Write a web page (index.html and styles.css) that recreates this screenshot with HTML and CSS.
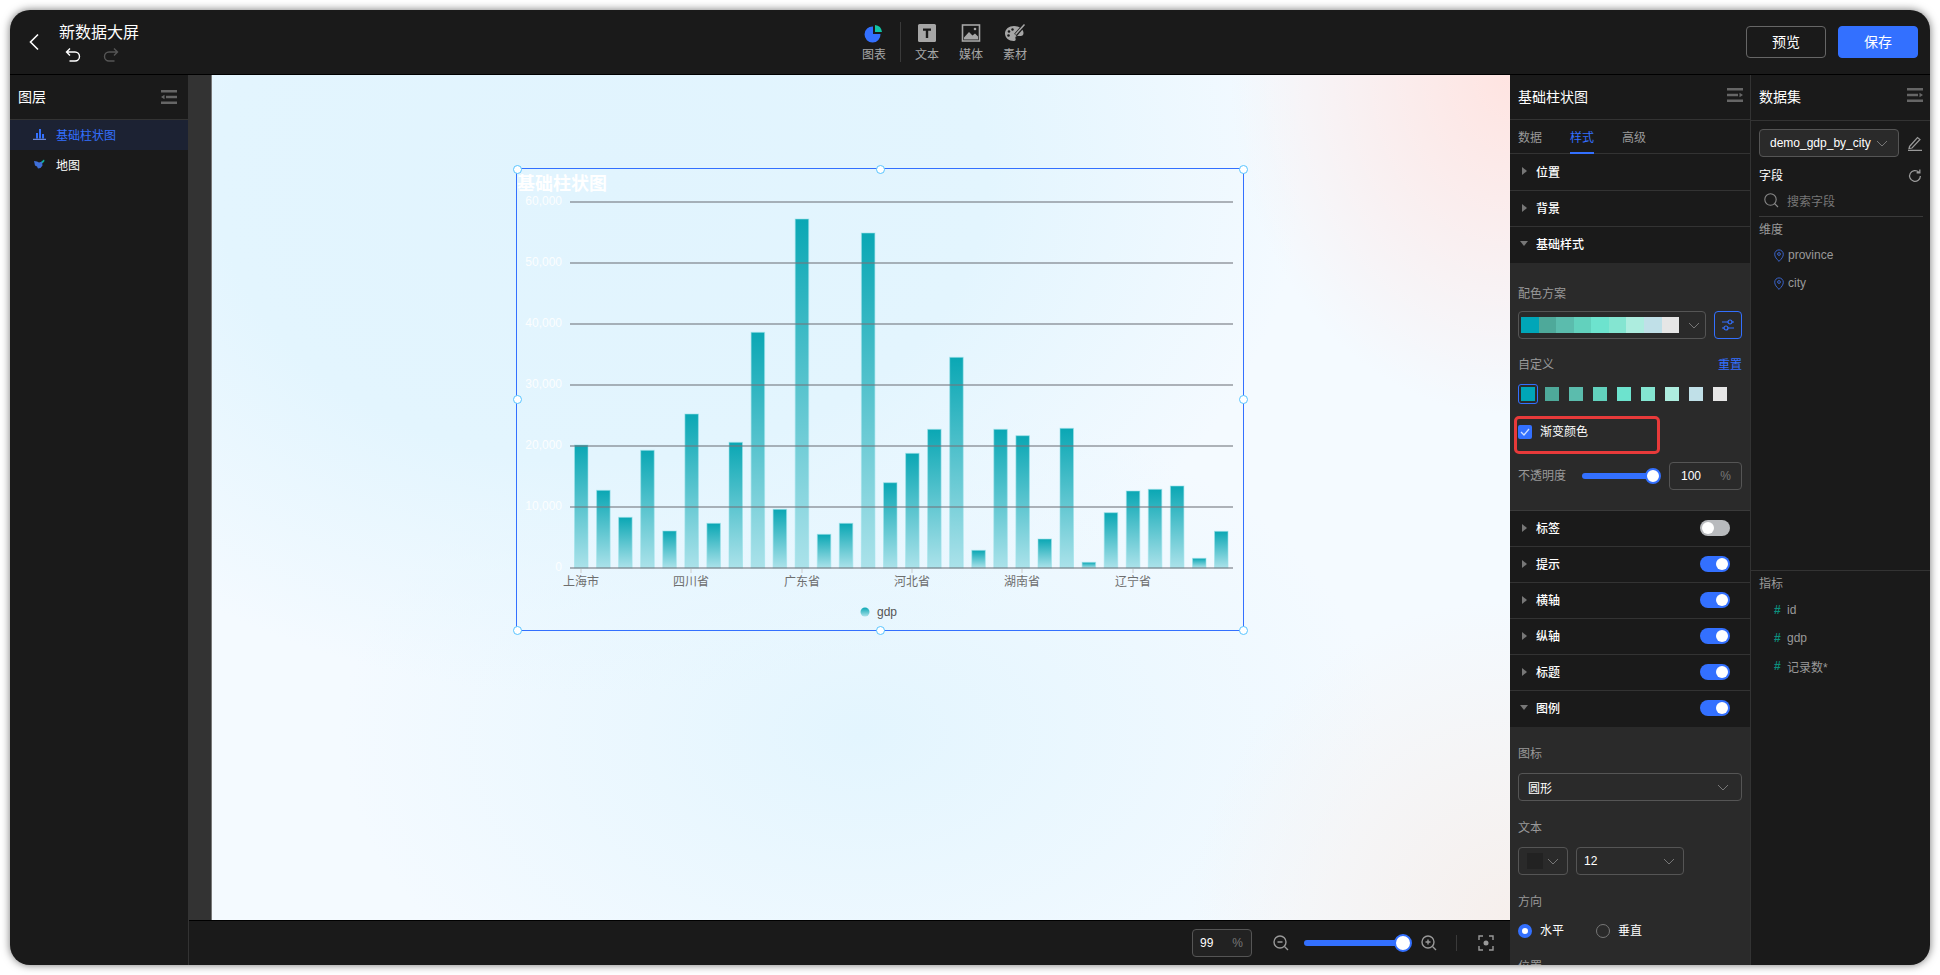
FILE: index.html
```html
<!DOCTYPE html>
<html lang="zh-CN">
<head>
    <meta charset="UTF-8">
    <title>新数据大屏</title>
    <link rel="stylesheet" href="styles.css">
</head>
<body>
    <div class="app">
        <!-- top bar -->
        <header class="topbar">
            <div class="top-left">
                <svg class="back" width="12" height="18" viewBox="0 0 12 18"><polyline points="10,1.5 2.5,9 10,16.5" /></svg>
                <div>
                    <div class="doc-title">新数据大屏</div>
                    <div class="history">
                        <svg width="16" height="16" viewBox="0 0 16 16"><path d="M5 1.5 1.5 5 5 8.5M1.5 5H10a4.5 4.5 0 0 1 0 9H4.5" /></svg>
                        <svg class="dim" width="16" height="16" viewBox="0 0 16 16"><path d="M11 1.5 14.500 5 11 8.500M14.500 5H6a4.500 4.500 0 0 0 0 9h5.500" /></svg>
                    </div>
                </div>
            </div>
            <div class="tools">
                <div class="tool">
                    <svg width="20" height="20" viewBox="0 0 20 20">
                        <path d="M9 3.500V11h7.500A8 8 0 1 1 9 3.500Z" fill="#3370ff" />
                        <path d="M11 2a8 8 0 0 1 7 7h-7Z" fill="#10c5a5" />
                    </svg>
                    <span>图表</span>
                </div>
                <i class="tool-sep"></i>
                <div class="tool">
                    <svg width="20" height="20" viewBox="0 0 20 20">
                        <rect x="1" y="1" width="18" height="18" rx="1.500" fill="#a6a6a6" />
                        <path d="M6 5.500h8v2.200h-2.800V15H8.800V7.700H6Z" fill="#1a1a1a" />
                    </svg>
                    <span>文本</span>
                </div>
                <div class="tool">
                    <svg width="20" height="20" viewBox="0 0 20 20">
                        <rect x="1.500" y="2" width="17" height="16" fill="#1a1a1a" stroke="#a6a6a6" stroke-width="1.600" />
                        <path d="M3 14.500 8 9l3.500 3.500 2.500-2 3 3v3H3Z" fill="#a6a6a6" />
                        <circle cx="14" cy="6" r="1.300" fill="#a6a6a6" />
                    </svg>
                    <span>媒体</span>
                </div>
                <div class="tool">
                    <svg width="22" height="20" viewBox="0 0 22 20">
                        <path d="M10 3c-5 0-9 3-9 7.500S5 18 9.500 18c2 0 2.500-1 2-2.500-.5-1.400.5-2.500 2-2.500h3c2 0 3-1 3-3C19.500 6 15 3 10 3Z" fill="#a6a6a6" />
                        <circle cx="5" cy="8.500" r="1.300" fill="#1a1a1a" /><circle cx="4.500" cy="12.500" r="1.300" fill="#1a1a1a" /><circle cx="8.500" cy="6.500" r="1.200" fill="#1a1a1a" />
                        <path d="M21 1 11.500 12" stroke="#1a1a1a" stroke-width="3.500" />
                        <path d="M20.500 1.500 11.500 11.500" stroke="#a6a6a6" stroke-width="1.500" />
                    </svg>
                    <span>素材</span>
                </div>
            </div>
            <div class="top-actions">
                <button class="btn">预览</button>
                <button class="btn btn-primary">保存</button>
            </div>
        </header>

        <div class="main">
            <!-- layers -->
            <aside class="layers">
                <div class="panel-head">
                    <span>图层</span>
                    <svg class="menu-icon" width="16" height="14" viewBox="0 0 16 14"><path d="M0 0h16v2.500H0ZM5 5.700h11v2.500H5ZM0 11.500h16V14H0ZM0 7l3.500-2.300v4.600Z" /></svg>
                </div>
                <div class="layer active">
                    <svg width="13" height="12" viewBox="0 0 13 12"><path d="M3 5h2v5.500H3ZM6 1h2v9.500H6ZM9 6h2v4.500H9Z" fill="#3370ff" /><path d="M0 11.300h13" stroke="#7f9fff" stroke-width="1" /></svg>
                    <span>基础柱状图</span>
                </div>
                <div class="layer">
                    <svg width="13" height="12" viewBox="0 0 13 12"><path d="M1 3l3 .5 2 1 3-1 .5 4-2 2.500-2.500.5-1-2-2-1Z" fill="#3f6fd8" /><path d="M8.500 3.500 11 1.500l.5 1.500-2 2.500Z" fill="#10b5a0" /></svg>
                    <span>地图</span>
                </div>
            </aside>

            <!-- centre -->
            <section class="centre">
                <div class="stage">
                    <div class="gutter"></div>
                    <div class="canvas">
                        <div class="chart-box">
                            <svg class="chart" width="728" height="463" viewBox="517 169 728 463">
                                <defs>
                                    <linearGradient id="barFill" x1="0" y1="0" x2="0" y2="1">
                                        <stop offset="0" stop-color="#0aa7b4" />
                                        <stop offset="1" stop-color="#abe2ea" />
                                    </linearGradient>
                                </defs>
                                <text class="chart-title" x="517" y="190">基础柱状图</text>
                                <g class="ticks">
                                    <path d="M581 569v4M691 569v4M802 569v4M912 569v4M1022 569v4M1133 569v4" />
                                </g>
                                <g class="y-labels">
                                    <text x="562" y="205">60,000</text>
                                    <text x="562" y="266">50,000</text>
                                    <text x="562" y="327">40,000</text>
                                    <text x="562" y="388">30,000</text>
                                    <text x="562" y="449">20,000</text>
                                    <text x="562" y="510">10,000</text>
                                    <text x="562" y="571">0</text>
                                </g>
                                <g class="bars">
                                    <rect x="574.500" y="445" width="13.500" height="123" />
                                    <rect x="596.600" y="490.300" width="13.500" height="77.700" />
                                    <rect x="618.600" y="517.300" width="13.500" height="50.700" />
                                    <rect x="640.700" y="450.300" width="13.500" height="117.700" />
                                    <rect x="662.800" y="531" width="13.500" height="37" />
                                    <rect x="684.900" y="414" width="13.500" height="154" />
                                    <rect x="706.900" y="523.300" width="13.500" height="44.700" />
                                    <rect x="729" y="442.300" width="13.500" height="125.700" />
                                    <rect x="751.100" y="332.300" width="13.500" height="235.700" />
                                    <rect x="773.100" y="509.300" width="13.500" height="58.700" />
                                    <rect x="795.200" y="219" width="13.500" height="349" />
                                    <rect x="817.300" y="534.300" width="13.500" height="33.700" />
                                    <rect x="839.300" y="523.300" width="13.500" height="44.700" />
                                    <rect x="861.400" y="233" width="13.500" height="335" />
                                    <rect x="883.500" y="482.700" width="13.500" height="85.300" />
                                    <rect x="905.600" y="453.300" width="13.500" height="114.700" />
                                    <rect x="927.600" y="429.300" width="13.500" height="138.700" />
                                    <rect x="949.700" y="357.300" width="13.500" height="210.700" />
                                    <rect x="971.800" y="550.300" width="13.500" height="17.700" />
                                    <rect x="993.800" y="429.300" width="13.500" height="138.700" />
                                    <rect x="1015.900" y="435.700" width="13.500" height="132.300" />
                                    <rect x="1038" y="539" width="13.500" height="29" />
                                    <rect x="1060" y="428.300" width="13.500" height="139.700" />
                                    <rect x="1082.100" y="562.300" width="13.500" height="5.700" />
                                    <rect x="1104.200" y="512.700" width="13.500" height="55.300" />
                                    <rect x="1126.300" y="491" width="13.500" height="77" />
                                    <rect x="1148.300" y="489.300" width="13.500" height="78.700" />
                                    <rect x="1170.400" y="486" width="13.500" height="82" />
                                    <rect x="1192.500" y="558.300" width="13.500" height="9.700" />
                                    <rect x="1214.500" y="531.300" width="13.500" height="36.700" />
                                </g>
                                <!-- grid goes over the bars so it shows through them -->
                                <g class="grid">
                                    <path d="M570 202H1233M570 263H1233M570 324H1233M570 385H1233M570 446H1233M570 507H1233M570 568H1233" />
                                </g>
                                <g class="x-labels">
                                    <text x="581" y="586">上海市</text>
                                    <text x="691" y="586">四川省</text>
                                    <text x="802" y="586">广东省</text>
                                    <text x="912" y="586">河北省</text>
                                    <text x="1022" y="586">湖南省</text>
                                    <text x="1133" y="586">辽宁省</text>
                                </g>
                                <circle cx="865" cy="612" r="4.500" fill="url(#barFill)" />
                                <text class="legend-text" x="877" y="616">gdp</text>
                            </svg>
                            <i class="handle h-tl"></i><i class="handle h-tm"></i><i class="handle h-tr"></i>
                            <i class="handle h-ml"></i><i class="handle h-mr"></i>
                            <i class="handle h-bl"></i><i class="handle h-bm"></i><i class="handle h-br"></i>
                        </div>
                    </div>
                </div>
                <div class="statusbar">
                    <div class="field zoom-field"><span class="val">99</span><span class="unit">%</span></div>
                    <svg class="stat-icon" width="18" height="18" viewBox="0 0 18 18"><circle cx="8" cy="8" r="6" /><path d="M5.500 8h5M12.500 12.500 16 16" /></svg>
                    <div class="slider zoom-slider"><i class="thumb big"></i></div>
                    <svg class="stat-icon" width="18" height="18" viewBox="0 0 18 18"><circle cx="8" cy="8" r="6" /><path d="M5.500 8h5M8 5.500v5M12.500 12.500 16 16" /></svg>
                    <i class="stat-sep"></i>
                    <svg class="stat-icon" width="16" height="16" viewBox="0 0 16 16"><path d="M1 5V1h4M11 1h4v4M15 11v4h-4M5 15H1v-4" /><circle cx="8" cy="8" r="2.500" fill="#999" stroke="none" /></svg>
                </div>
            </section>

            <!-- style panel -->
            <aside class="props">
                <div class="panel-head">
                    <span>基础柱状图</span>
                    <svg class="menu-icon" width="16" height="14" viewBox="0 0 16 14"><path d="M0 0h16v2.500H0ZM0 5.700h11v2.500H0ZM0 11.500h16V14H0ZM16 7l-3.500-2.300v4.600Z" /></svg>
                </div>
                <div class="tabs">
                    <span>数据</span>
                    <span class="on">样式</span>
                    <span>高级</span>
                </div>
                <div class="row row-tall"><i class="tri"></i><span>位置</span></div>
                <div class="row"><i class="tri"></i><span>背景</span></div>
                <div class="row row-open"><i class="tri down"></i><span>基础样式</span></div>
                <div class="group group-style">
                    <div class="lbl">配色方案</div>
                    <div class="scheme-line">
                        <div class="field scheme">
                            <div class="strip">
                                <i class="c1"></i><i class="c2"></i><i class="c3"></i><i class="c4"></i><i class="c5"></i><i class="c6"></i><i class="c7"></i><i class="c8"></i><i class="c9"></i>
                            </div>
                            <svg class="chev" width="12" height="7" viewBox="0 0 12 7"><path d="M1 1l5 5 5-5" /></svg>
                        </div>
                        <div class="tune">
                            <svg width="14" height="14" viewBox="0 0 14 14"><path d="M1 4h12M1 10h12" /><circle cx="9" cy="4" r="2" fill="#2a2a2a" /><circle cx="5" cy="10" r="2" fill="#2a2a2a" /></svg>
                        </div>
                    </div>
                    <div class="lbl-line">
                        <span class="lbl">自定义</span>
                        <a class="reset">重置</a>
                    </div>
                    <div class="swatches">
                        <span class="sw-wrap"><i class="c1"></i></span>
                        <i class="c2"></i><i class="c3"></i><i class="c4"></i><i class="c5"></i><i class="c6"></i><i class="c7"></i><i class="c8"></i><i class="c9"></i>
                    </div>
                    <div class="check-line">
                        <span class="checkbox"><svg width="10" height="8" viewBox="0 0 10 8"><path d="M1 4l3 3 5-6" /></svg></span>
                        <span>渐变颜色</span>
                        <i class="mark"></i>
                    </div>
                    <div class="opacity-line">
                        <span class="lbl">不透明度</span>
                        <div class="slider opacity-slider"><i class="thumb"></i></div>
                        <div class="field opacity-field"><span class="val">100</span><span class="unit">%</span></div>
                    </div>
                </div>
                <div class="row"><i class="tri"></i><span>标签</span><i class="toggle off"></i></div>
                <div class="row"><i class="tri"></i><span>提示</span><i class="toggle"></i></div>
                <div class="row"><i class="tri"></i><span>横轴</span><i class="toggle"></i></div>
                <div class="row"><i class="tri"></i><span>纵轴</span><i class="toggle"></i></div>
                <div class="row"><i class="tri"></i><span>标题</span><i class="toggle"></i></div>
                <div class="row row-open"><i class="tri down"></i><span>图例</span><i class="toggle"></i></div>
                <div class="group group-legend">
                    <div class="lbl">图标</div>
                    <div class="field sel-full">
                        <span>圆形</span>
                        <svg class="chev" width="12" height="7" viewBox="0 0 12 7"><path d="M1 1l5 5 5-5" /></svg>
                    </div>
                    <div class="lbl gap-top">文本</div>
                    <div class="text-line">
                        <div class="field sel-colour">
                            <i class="dark-sw"></i>
                            <svg class="chev" width="12" height="7" viewBox="0 0 12 7"><path d="M1 1l5 5 5-5" /></svg>
                        </div>
                        <div class="field sel-size">
                            <span>12</span>
                            <svg class="chev" width="12" height="7" viewBox="0 0 12 7"><path d="M1 1l5 5 5-5" /></svg>
                        </div>
                    </div>
                    <div class="lbl gap-top">方向</div>
                    <div class="radio-line">
                        <label class="radio-item"><i class="radio on"></i><span>水平</span></label>
                        <label class="radio-item"><i class="radio"></i><span>垂直</span></label>
                    </div>
                    <div class="lbl gap-top">位置</div>
                </div>
            </aside>

            <!-- dataset -->
            <aside class="dataset">
                <div class="panel-head data-head">
                    <span>数据集</span>
                    <svg class="menu-icon" width="16" height="14" viewBox="0 0 16 14"><path d="M0 0h16v2.500H0ZM0 5.700h11v2.500H0ZM0 11.500h16V14H0ZM16 7l-3.500-2.300v4.600Z" /></svg>
                </div>
                <div class="data-top">
                    <div class="ds-line">
                        <div class="field ds-select">
                            <span>demo_gdp_by_city</span>
                            <svg class="chev" width="12" height="7" viewBox="0 0 12 7"><path d="M1 1l5 5 5-5" /></svg>
                        </div>
                        <svg class="ds-edit" width="14" height="15" viewBox="0 0 14 15"><path d="M1.500 10.500 9.500 1.500l2.500 2-8 8.500-3 .5ZM0 14.300h14" /></svg>
                    </div>
                    <div class="field-head">
                        <span>字段</span>
                        <svg class="ds-edit" width="14" height="14" viewBox="0 0 13 13"><path d="M11.500 6.500a5 5 0 1 1-1.500-3.600M11 .5v3H8" /></svg>
                    </div>
                    <div class="search">
                        <svg width="15" height="15" viewBox="0 0 15 15"><circle cx="6.500" cy="6.500" r="5.700" /><path d="M10.500 10.500 14 14" /></svg>
                        <span>搜索字段</span>
                    </div>
                    <div class="lbl dim-title">维度</div>
                    <div class="item">
                        <svg class="pin" width="10" height="13" viewBox="0 0 10 13"><path d="M5 12.300C2.500 10 .7 7.800.7 5.200a4.300 4.300 0 0 1 8.600 0C9.300 7.800 7.500 10 5 12.300Z" /><circle cx="5" cy="5" r="1.400" /></svg>
                        <span>province</span>
                    </div>
                    <div class="item">
                        <svg class="pin" width="10" height="13" viewBox="0 0 10 13"><path d="M5 12.300C2.500 10 .7 7.800.7 5.200a4.300 4.300 0 0 1 8.600 0C9.300 7.800 7.500 10 5 12.300Z" /><circle cx="5" cy="5" r="1.400" /></svg>
                        <span>city</span>
                    </div>
                </div>
                <div class="data-bottom">
                    <div class="lbl">指标</div>
                    <div class="item"><b class="hash">#</b><span>id</span></div>
                    <div class="item"><b class="hash">#</b><span>gdp</span></div>
                    <div class="item"><b class="hash">#</b><span>记录数*</span></div>
                </div>
            </aside>
        </div>
    </div>
</body>
</html>
```

FILE: styles.css
```css
* {
    box-sizing: border-box;
}

body {
    margin: 0;
    padding: 10px;
    height: 975px;
    overflow: hidden;
    background-color: #fff;
    font-family: "Liberation Sans", "Noto Sans CJK SC", sans-serif;
    font-size: 12px;
    color: #fff;
}

i {
    display: block;
    font-style: normal;
}

.app {
    width: 1920px;
    height: 955px;
    display: flex;
    flex-direction: column;
    background-color: #1a1a1a;
    border-radius: 20px;
    overflow: hidden;
    box-shadow: 0 0 8px rgba(0, 0, 0, 0.55);
}

/* top bar */
.topbar {
    height: 65px;
    flex-shrink: 0;
    display: flex;
    align-items: center;
    border-bottom: 1px solid #000;
    padding-right: 12px;
}

.top-left {
    width: 848px;
    display: flex;
    align-items: center;
    padding-left: 18px;
}

.back {
    fill: none;
    stroke: #fff;
    stroke-width: 1.6;
    margin-right: 19px;
}

.doc-title {
    font-size: 16px;
    line-height: 22px;
    margin-top: 1px;
}

.history {
    display: flex;
    gap: 22px;
    padding: 3px 0 0 6px;
}

.history svg {
    fill: none;
    stroke: #fff;
    stroke-width: 1.4;
}

.history svg.dim {
    stroke: #555;
}

.tools {
    display: flex;
    align-items: center;
    gap: 12px;
}

.tool {
    width: 32px;
    display: flex;
    flex-direction: column;
    align-items: center;
    color: #a6a6a6;
    margin-top: 3px;
}

.tool svg {
    margin-bottom: 3px;
}

.tool span {
    white-space: nowrap;
    line-height: 18px;
}

.tool-sep {
    width: 1px;
    height: 40px;
    background-color: #3a3a3a;
    margin: 0 -2px;
}

.top-actions {
    margin-left: auto;
    display: flex;
    gap: 12px;
}

.btn {
    width: 80px;
    height: 32px;
    padding: 0 0 2px;
    border: 1px solid #666;
    border-radius: 4px;
    background: transparent;
    color: #fff;
    font: inherit;
    font-size: 14px;
}

.btn-primary {
    background-color: #3370ff;
    border-color: #3370ff;
}

.main {
    flex: 1;
    display: flex;
    min-height: 0;
}

/* shared panel bits */
.panel-head {
    height: 45px;
    display: flex;
    align-items: center;
    justify-content: space-between;
    padding: 0 7px 3px 8px;
    border-bottom: 1px solid #333;
    font-size: 14px;
}

.menu-icon {
    fill: #666;
    margin-top: -2px;
}

.lbl {
    color: #999;
    line-height: 18px;
}

.field {
    height: 28px;
    display: flex;
    align-items: center;
    border: 1px solid #555;
    border-radius: 4px;
}

.chev {
    fill: none;
    stroke: #777;
    stroke-width: 1;
}

.val {
    color: #fff;
}

.unit {
    color: #777;
    margin-left: auto;
}

.slider {
    height: 6px;
    border-radius: 3px;
    background-color: #3370ff;
    position: relative;
}

.thumb {
    position: absolute;
    right: -8px;
    top: -5px;
    width: 16px;
    height: 16px;
    border-radius: 50%;
    background-color: #fff;
    border: 2px solid #3370ff;
}

.thumb.big {
    right: -9px;
    top: -6px;
    width: 18px;
    height: 18px;
}

/* layers */
.layers {
    width: 179px;
    flex-shrink: 0;
    border-right: 1px solid #333;
}

.layers .panel-head {
    padding: 0 11px 2px 8px;
}

.layers .menu-icon {
    margin-top: 2px;
}

.layer {
    height: 30px;
    display: flex;
    align-items: center;
    gap: 10px;
    padding: 0 0 2px 23px;
}

.layer.active {
    background-color: #1c2233;
    color: #3370ff;
}

/* centre */
.centre {
    width: 1321px;
    flex-shrink: 0;
    display: flex;
    flex-direction: column;
}

.stage {
    flex: 1;
    display: flex;
    min-height: 0;
}

.gutter {
    width: 23px;
    flex-shrink: 0;
    background-color: #333;
    border-right: 1px solid #777;
}

.canvas {
    flex: 1;
    position: relative;
    overflow: hidden;
    background:
        radial-gradient(ellipse 280px 340px at 100% 0, #ffe4e1 0, rgba(255, 228, 225, 0) 100%),
        radial-gradient(ellipse 320px 320px at 100% 100%, #f6efec 0, rgba(246, 239, 236, 0) 100%),
        radial-gradient(ellipse 700px 520px at 30% 12%, #e1f4fe 0, #e3f5fe 55%, rgba(227, 245, 254, 0) 100%),
        radial-gradient(ellipse 520px 340px at 50% 78%, #e3f5fe 0, rgba(227, 245, 254, 0) 100%),
        #f4faff;
}

.chart-box {
    position: absolute;
    left: 304px;
    top: 93px;
    width: 728px;
    height: 463px;
    border: 1px solid #3370ff;
}

.chart {
    position: absolute;
    left: 0;
    top: 0;
}

.chart-title {
    font-size: 18px;
    font-weight: bold;
    fill: #fff;
}

.grid path {
    fill: none;
    stroke: #73777d;
    stroke-opacity: 0.55;
    stroke-width: 2;
}

.ticks path {
    stroke: #ccc;
    stroke-width: 1;
}

.y-labels text {
    text-anchor: end;
    fill: #fff;
    fill-opacity: 0.9;
    font-size: 12px;
}

.bars rect {
    fill: url(#barFill);
    stroke: #9fe3ea;
    stroke-opacity: 0.6;
    stroke-width: 1;
}

.x-labels text {
    text-anchor: middle;
    fill: #6e6e6e;
    font-size: 12px;
}

.legend-text {
    fill: #555;
    font-size: 12px;
}

.handle {
    position: absolute;
    width: 9px;
    height: 9px;
    margin: -4.5px 0 0 -4.5px;
    border-radius: 50%;
    background-color: #fff;
    border: 1px solid #57c4ff;
}

.h-tl, .h-tm, .h-tr { top: 0; }
.h-ml, .h-mr { top: 50%; }
.h-bl, .h-bm, .h-br { top: 100%; }
.h-tl, .h-ml, .h-bl { left: 0; }
.h-tm, .h-bm { left: 50%; }
.h-tr, .h-mr, .h-br { left: 100%; }

.statusbar {
    height: 45px;
    flex-shrink: 0;
    border-top: 1px solid #000;
    display: flex;
    align-items: center;
    padding-right: 16px;
    justify-content: flex-end;
}

.zoom-field {
    width: 60px;
    padding: 0 8px 0 7px;
    margin-right: 20px;
    background-color: #222;
}

.stat-icon {
    fill: none;
    stroke: #999;
    stroke-width: 1.4;
}

.zoom-slider {
    width: 99px;
    margin: 0 17px 0 14px;
}

.stat-sep {
    width: 1px;
    height: 16px;
    background-color: #3a3a3a;
    margin: 0 21px 0 18px;
}

/* style panel */
.props {
    width: 241px;
    flex-shrink: 0;
    border-right: 1px solid #333;
    overflow: hidden;
}

.tabs {
    height: 34px;
    display: flex;
    gap: 28px;
    padding: 0 8px;
    border-bottom: 1px solid #333;
    color: #999;
}

.tabs span {
    line-height: 36px;
}

.tabs .on {
    color: #3370ff;
    border-bottom: 2px solid #3370ff;
    height: 34px;
}

.row {
    height: 36px;
    display: flex;
    align-items: center;
    gap: 8px;
    padding: 0 20px 2px 12px;
    border-bottom: 1px solid #333;
    font-weight: 500;
}

.row-tall {
    height: 37px;
}

.row-open {
    border-bottom: none;
    padding-bottom: 3px;
}

.tri {
    width: 0;
    height: 0;
    border-left: 5px solid #777;
    border-top: 4px solid transparent;
    border-bottom: 4px solid transparent;
    margin-right: 1px;
}

.tri.down {
    border-top: 5px solid #777;
    border-left: 4px solid transparent;
    border-right: 4px solid transparent;
    border-bottom: none;
    margin: 0 0 0 -2px;
}

.toggle {
    width: 30px;
    height: 16px;
    margin-left: auto;
    border-radius: 8px;
    background-color: #3370ff;
    position: relative;
}

.toggle::after {
    content: "";
    position: absolute;
    right: 2px;
    top: 2px;
    width: 12px;
    height: 12px;
    border-radius: 50%;
    background-color: #fff;
}

.toggle.off {
    background-color: #b8babd;
}

.toggle.off::after {
    right: auto;
    left: 2px;
}

.group {
    background-color: #2a2a2a;
    padding: 0 8px;
}

.group-style {
    height: 248px;
    padding-top: 22px;
    border-bottom: 1px solid #3a3a3a;
}

.scheme-line {
    display: flex;
    justify-content: space-between;
    margin-top: 8px;
}

.scheme {
    width: 188px;
    padding: 0 5px 0 2px;
    justify-content: space-between;
}

.strip {
    width: 158px;
    height: 16px;
    display: flex;
}

.strip i {
    flex: 1;
}

.tune {
    width: 28px;
    height: 28px;
    display: flex;
    align-items: center;
    justify-content: center;
    border: 1px solid #3370ff;
    border-radius: 4px;
}

.tune svg {
    fill: none;
    stroke: #3370ff;
    stroke-width: 1.2;
}

.lbl-line {
    display: flex;
    justify-content: space-between;
    margin-top: 17px;
    line-height: 18px;
}

.reset {
    color: #3370ff;
}

.swatches {
    display: flex;
    align-items: center;
    gap: 10px;
    margin-top: 10px;
    height: 20px;
}

.swatches > i {
    width: 14px;
    height: 14px;
}

.sw-wrap {
    width: 20px;
    height: 20px;
    display: flex;
    align-items: center;
    justify-content: center;
    border: 1px solid #3370ff;
    border-radius: 3px;
    margin-right: -3px;
}

.sw-wrap i {
    width: 14px;
    height: 14px;
}

.c1 { background-color: #00a6b8; }
.c2 { background-color: #4ea99a; }
.c3 { background-color: #5bbcad; }
.c4 { background-color: #62d1bd; }
.c5 { background-color: #6de3ce; }
.c6 { background-color: #84e5d1; }
.c7 { background-color: #adeddf; }
.c8 { background-color: #c0e0e8; }
.c9 { background-color: #e6e6e6; }

.check-line {
    position: relative;
    display: flex;
    align-items: center;
    gap: 8px;
    margin-top: 19px;
    line-height: 18px;
}

.checkbox {
    width: 14px;
    height: 14px;
    display: flex;
    align-items: center;
    justify-content: center;
    background-color: #3370ff;
    border-radius: 2px;
}

.checkbox svg {
    fill: none;
    stroke: #cfe0ff;
    stroke-width: 1.3;
}

/* red annotation drawn over the panel */
.mark {
    position: absolute;
    left: -4px;
    top: -7px;
    width: 146px;
    height: 38px;
    border: 3px solid #e83a3a;
    border-radius: 5px;
}

.opacity-line {
    display: flex;
    align-items: center;
    margin-top: 21px;
}

.opacity-slider {
    width: 71px;
    margin-left: 16px;
}

.opacity-field {
    width: 73px;
    margin-left: auto;
    padding: 0 10px 0 11px;
}

.group-legend {
    padding-top: 18px;
    height: 240px;
}

.group-legend .field {
    margin-top: 10px;
}

.gap-top {
    margin-top: 18px;
}

.sel-full {
    justify-content: space-between;
    padding: 0 12px 0 9px;
}

.text-line {
    display: flex;
    gap: 8px;
}

.sel-colour {
    width: 50px;
    padding: 0 8px;
    justify-content: space-between;
}

.dark-sw {
    width: 16px;
    height: 16px;
    background-color: #222;
}

.sel-size {
    width: 108px;
    padding: 0 8px 0 7px;
    justify-content: space-between;
}

.radio-line {
    display: flex;
    margin-top: 11px;
    line-height: 18px;
}

.radio-item {
    width: 78px;
    display: flex;
    align-items: center;
    gap: 8px;
}

.radio {
    width: 14px;
    height: 14px;
    border-radius: 50%;
    border: 1px solid #777;
}

.radio.on {
    border: 4.5px solid #3370ff;
    background-color: #fff;
}

/* dataset */
.dataset {
    width: 179px;
    flex-shrink: 0;
    display: flex;
    flex-direction: column;
}

.data-head {
    height: 46px;
}

.data-top {
    height: 450px;
    padding: 8px 7px 0 8px;
    border-bottom: 1px solid #333;
}

.ds-line {
    display: flex;
    align-items: center;
    justify-content: space-between;
    padding-right: 1px;
}

.ds-select {
    width: 140px;
    padding: 0 10px;
    justify-content: space-between;
    background-color: #2a2a2a;
}

.ds-edit {
    fill: none;
    stroke: #999;
    stroke-width: 1.2;
}

.field-head {
    display: flex;
    justify-content: space-between;
    align-items: center;
    margin-top: 10px;
    line-height: 18px;
    padding-right: 1px;
}

.search {
    height: 30px;
    margin-top: 2px;
    display: flex;
    align-items: center;
    gap: 8px;
    padding: 0 0 3px 5px;
    border-bottom: 1px solid #3a3a3a;
    color: #777;
}

.search svg {
    fill: none;
    stroke: #888;
    stroke-width: 1.1;
}

.dim-title {
    margin-top: 4px;
}

.item {
    height: 28px;
    display: flex;
    align-items: center;
    gap: 4px;
    padding-left: 15px;
    color: #999;
}

.dim-title + .item {
    margin-top: 2px;
}

.pin {
    fill: none;
    stroke: #3a63c8;
    stroke-width: 1;
}

.hash {
    width: 9px;
    font-weight: bold;
    color: #0c8f7d;
}

.data-bottom {
    padding: 4px 8px 0;
}

.data-bottom .lbl {
    margin-bottom: 3px;
}
```
